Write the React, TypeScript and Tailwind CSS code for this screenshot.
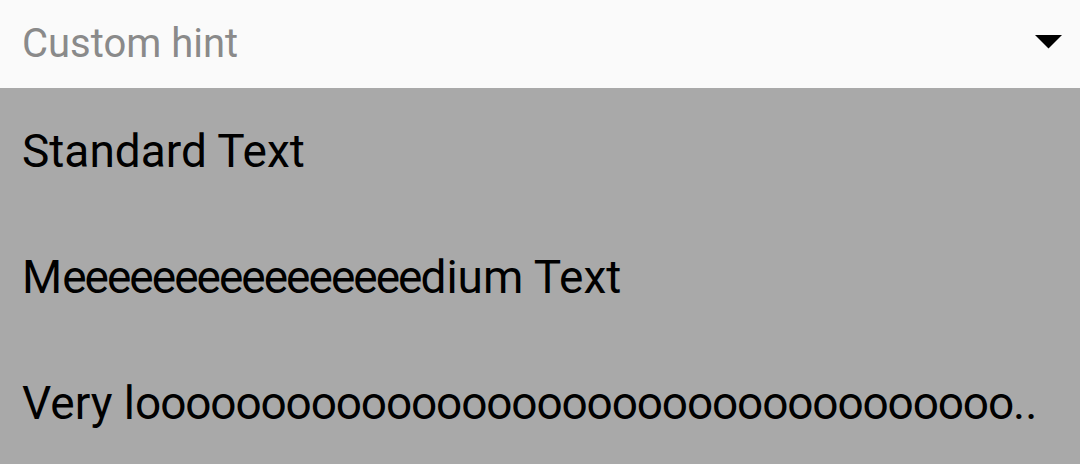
export default function App() {
  const row = "h-[126px] flex items-center pl-[22px] text-[46px] text-black whitespace-nowrap leading-none";
  return (
    <div className="w-[1080px] h-[464px] overflow-hidden bg-[#a9a9a9]" style={{ fontFamily: "Roboto, sans-serif" }}>
      <div className="h-[88px] bg-[#fafafa] flex items-center justify-between pl-[22px] pr-[18px]">
        <span className="text-[40px] text-[#8a8a8a] leading-none">Custom hint</span>
        <svg className="mb-[5px]" width="27" height="14" viewBox="0 0 27 14"><polygon points="0,0 27,0 13.5,13.5" fill="#000" /></svg>
      </div>
      <div className={row}>Standard Text</div>
      <div className={row}>
        <span>M</span>
        <span className="tracking-[-2px]">eeeeeeeeeeeeeeee</span>
        <span>dium Text</span>
      </div>
      <div className={row}>
        <span>Very l</span>
        <span className="tracking-[-1.15px]">ooooooooooooooooooooooooooooooooooo</span>
        <span>..</span>
      </div>
    </div>
  );
}
